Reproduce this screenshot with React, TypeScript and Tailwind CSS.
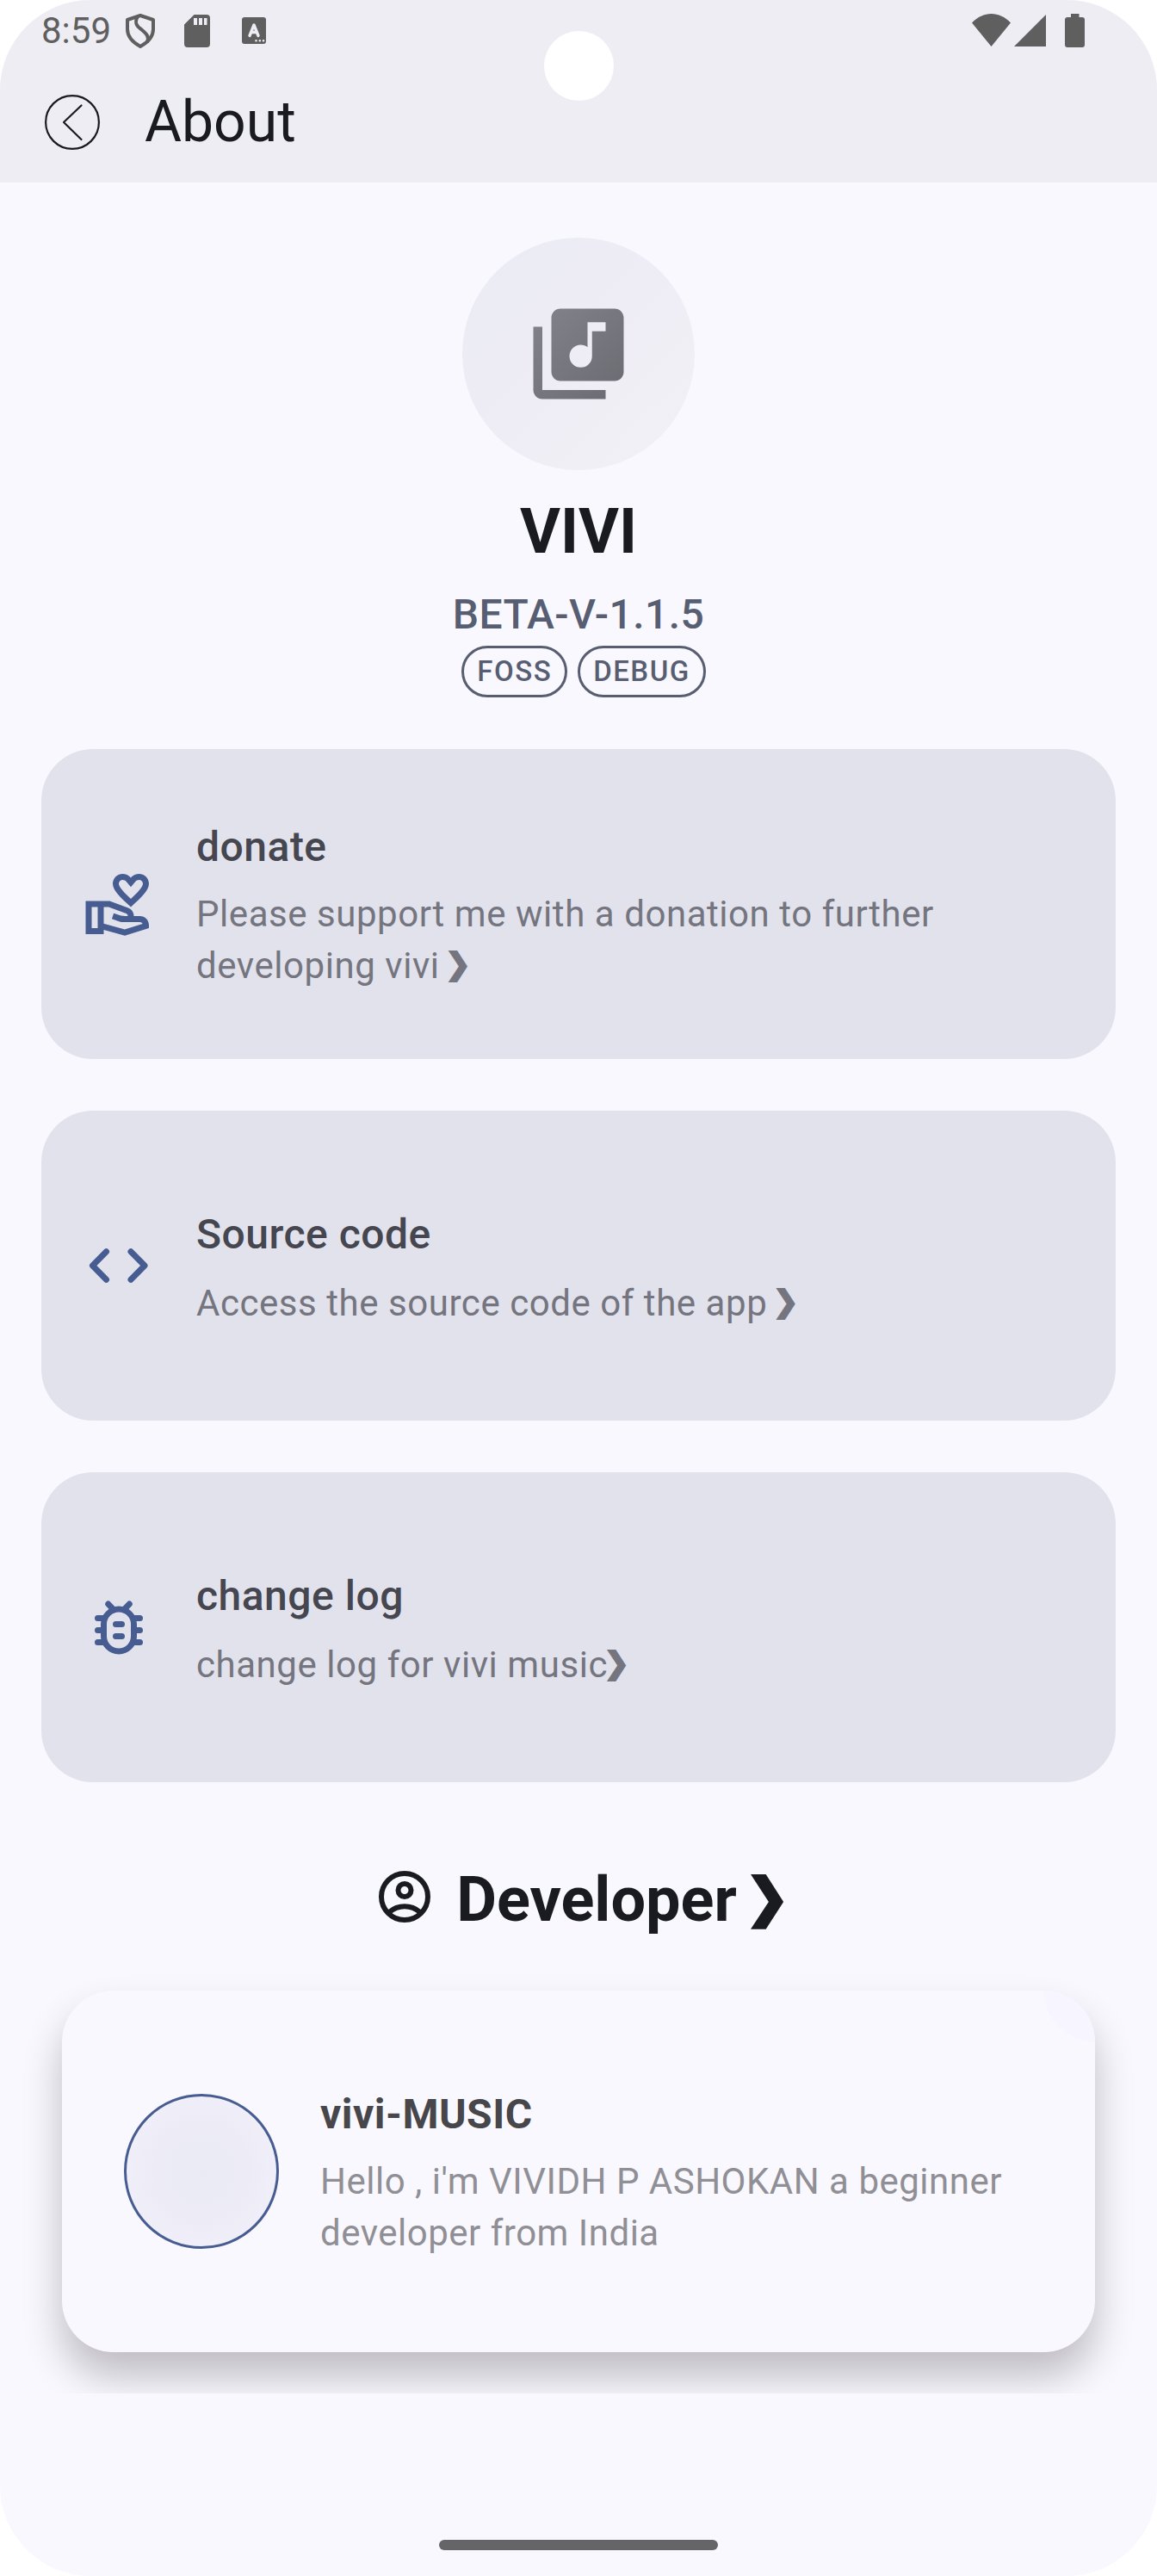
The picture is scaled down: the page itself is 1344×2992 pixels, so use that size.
import React from "react";
import { MdOutlineVolunteerActivism } from "react-icons/md";

function Chevron() {
  return (
    <span className="relative top-[0.01em] inline-flex w-[0.44em] justify-center font-['DejaVu_Sans_Mono',monospace] text-[1.14em] font-normal leading-none tracking-normal [-webkit-text-stroke:0.045em_currentColor]">
      ❯
    </span>
  );
}

function StatusBar() {
  return (
    <div className="flex h-[68px] items-start justify-between pl-12 pr-[84px] text-[#5f5f60]">
      <div className="flex items-start">
        <span className="mt-[11px] w-[96px] text-[42px] leading-[50px]">8:59</span>
        <svg className="mt-[15px] h-[42px] w-[38px]" viewBox="0 0 38 42" fill="none" stroke="currentColor" strokeWidth="4">
          <path d="M19 3 34 8v11c0 8-6 15-15 20C10 34 4 27 4 19V8Z" strokeLinejoin="round" />
          <path d="M16 4c-4 7-2 11 4 15 6 5 10 9 7 15" />
        </svg>
        <svg className="ml-[32px] mt-[17px] h-[38px] w-[30px]" viewBox="0 0 30 38" fill="currentColor">
          <path
            fillRule="evenodd"
            d="M11.500 0H26a4 4 0 0 1 4 4v30a4 4 0 0 1-4 4H4a4 4 0 0 1-4-4V11.500ZM11 4v8h4V4Zm6 0v8h4V4Zm6 0v8h3.500V4Z"
          />
        </svg>
        <span className="ml-[37px] mt-5 flex h-[31px] w-[28px] rounded-[3px] bg-[#5f5f60]">
          <svg className="h-[31px] w-[28px]" viewBox="0 0 28 31" fill="none" stroke="#eeedf4" strokeWidth="3.400" strokeLinecap="round" strokeLinejoin="round">
            <path d="m9 21.500 5-12.500 5 12.500M11 17.500h6" />
            <path d="M16.500 27.300h.01M20.800 27.300h.01M25 27.300h.01" strokeWidth="2.600" />
          </svg>
        </span>
      </div>
      <div className="flex">
        <svg className="mt-4 h-[38px] w-[45px]" viewBox="0 0 45 38" fill="currentColor">
          <path d="M0 10.500C13-3.500 32-3.500 45 10.500L22.500 38Z" />
        </svg>
        <svg className="ml-1 mt-[17px] h-[37px] w-[37px]" viewBox="0 0 37 37" fill="currentColor">
          <path d="M37 0v37H0Z" />
        </svg>
        <svg className="ml-[22px] mt-4 h-[39px] w-[23px]" viewBox="0 0 23 39" fill="currentColor">
          <path d="M7 0h9.500v4H20a3 3 0 0 1 3 3v29a3 3 0 0 1-3 3H3a3 3 0 0 1-3-3V7a3 3 0 0 1 3-3h4Z" />
        </svg>
      </div>
    </div>
  );
}

function LibraryIcon() {
  return (
    <svg className="size-[126px]" viewBox="0 0 24 24">
      <linearGradient id="note" x1="0" y1="0" x2="1" y2="1">
        <stop offset="0" stopColor="#83838c" />
        <stop offset="1" stopColor="#6a6a71" />
      </linearGradient>
      <path
        fill="url(#note)"
        d="M20 2H8c-1.100 0-2 .9-2 2v12c0 1.100.9 2 2 2h12c1.100 0 2-.9 2-2V4c0-1.100-.9-2-2-2zm-2 5h-3v5.500a2.500 2.500 0 0 1-5 0 2.500 2.500 0 0 1 2.500-2.500c.57 0 1.080.19 1.500.51V5h4v2zM4 6H2v14c0 1.100.9 2 2 2h14v-2H4V6z"
      />
    </svg>
  );
}

function CodeIcon() {
  return (
    <svg className="size-[84px]" viewBox="0 0 84 84" fill="none" stroke="currentColor" strokeWidth="7" strokeLinecap="round" strokeLinejoin="round">
      <path d="M27.500 25.700 11.500 42l16 16.300M56 25.700 72 42 56 58.300" />
    </svg>
  );
}

function BugIcon() {
  return (
    <svg className="size-[84px]" viewBox="0 0 24 24" fill="none" stroke="currentColor" strokeWidth="2" strokeLinecap="round">
      <rect x="7" y="6" width="10" height="14" rx="5" />
      <path d="M11 11h2M11 15h2M5 9h2M5 13h2M5 17h2M17 9h2M17 13h2M17 17h2M8.500 4.300l1.800 1.900M15.500 4.300l-1.800 1.900" />
    </svg>
  );
}

function AccountIcon() {
  return (
    <svg className="size-[72px]" viewBox="0 0 24 24" fill="none" stroke="currentColor" strokeWidth="2">
      <circle cx="12" cy="12" r="9" />
      <circle cx="12" cy="9.500" r="2.500" />
      <path d="M6 18c3.500-3 8.500-3 12 0" />
    </svg>
  );
}

function InfoCard({
  icon,
  title,
  textClass = "mt-[14px] -mb-0.5",
  children,
}: {
  icon: React.ReactNode;
  title: string;
  textClass?: string;
  children: React.ReactNode;
}) {
  return (
    <section className="flex h-[360px] items-center gap-12 rounded-[60px] bg-[#e1e2ec] px-12">
      <div className="shrink-0 text-[#475d92]">{icon}</div>
      <div>
        <h2 className="text-[48px] font-medium leading-[72px] tracking-[0.5px] text-[#45464f]">{title}</h2>
        <p className={`text-[42px] leading-[60px] tracking-[0.55px] text-[#75757f] ${textClass}`}>{children}</p>
      </div>
    </section>
  );
}

export default function App() {
  return (
    <div className="h-[2992px] w-[1344px] bg-white">
      <div className="relative flex h-full flex-col overflow-hidden rounded-[105px] bg-[#faf8ff] font-[Roboto,sans-serif] text-[#1a1b20]">
        <div className="absolute left-[631.5px] top-[35.5px] size-[81px] rounded-full bg-white" />
        <header className="h-[212px] shrink-0 bg-[#eeedf4]">
          <StatusBar />
          <div className="flex h-[144px] items-center pl-[52px] pt-1">
            <svg className="size-16" viewBox="0 0 64 64" fill="none" stroke="currentColor" strokeWidth="2.200" strokeLinecap="round" strokeLinejoin="round">
              <circle cx="32" cy="32" r="30.900" />
              <path d="M42.500 12.500 22 32l20.500 20" />
            </svg>
            <h1 className="ml-[52px] text-[66px] leading-[84px]">About</h1>
          </div>
        </header>

        <main className="flex flex-col px-12 pt-16">
          <div className="flex flex-col items-center">
            <div className="flex size-[270px] items-center justify-center rounded-full bg-linear-135 from-[#ebebf3] via-[#eeedf6] to-[#f2f1f5]">
              <LibraryIcon />
            </div>
            <h2 className="mt-6 text-[72px] font-bold leading-[96px]">VIVI</h2>
            <p className="mt-3 text-[48px] font-medium leading-[72px] tracking-[0.45px] text-[#585e71]">BETA-V-1.1.5</p>
            <div className="flex text-[33px] font-medium leading-[54px] tracking-[1.5px] text-[#585e71]">
              <span className="ml-3 rounded-full border-[3px] border-[#585e71] px-[15px]">FOSS</span>
              <span className="ml-3 rounded-full border-[3px] border-[#585e71] px-[15px]">DEBUG</span>
            </div>
          </div>

          <div className="mt-[60px] flex flex-col gap-[60px]">
            <InfoCard icon={<MdOutlineVolunteerActivism className="size-[84px]" />} title="donate" textClass="mt-3">
              Please support me with a donation to further
              <br />
              developing vivi <Chevron />
            </InfoCard>
            <InfoCard icon={<CodeIcon />} title="Source code">
              Access the source code of the app <Chevron />
            </InfoCard>
            <InfoCard icon={<BugIcon />} title="change log">
              change log for vivi music
              <Chevron />
            </InfoCard>
          </div>

          <div className="mt-[88px] flex h-24 items-start justify-center gap-6">
            <div className="mt-[9px]">
              <AccountIcon />
            </div>
            <h2 className="pt-px text-[72px] font-bold leading-[96px]">
              Developer <Chevron />
            </h2>
          </div>
        </main>

        <div className="-mt-2 h-[534px] shrink-0 overflow-hidden px-[72px] pt-[66px]">
          <section className="relative flex h-[420px] items-center gap-12 rounded-[60px] bg-[#faf8ff] px-[72px] shadow-[0_28px_46px_rgba(0,0,0,0.24)]">
            <div className="absolute inset-0 overflow-hidden rounded-[60px]">
              <div className="absolute -right-[60px] -top-[60px] size-[120px] rounded-full bg-[#f7f5ff]" />
            </div>
            <div className="size-[180px] shrink-0 rounded-full border-[3px] border-[#475d92] bg-[radial-gradient(circle_closest-side,#e9eaf4_0%,#edecf6_60%,#f0eef8_100%)]" />
            <div>
              <h3 className="text-[48px] font-bold leading-[72px] tracking-[0.5px] text-[#47474b]">vivi-MUSIC</h3>
              <p className="mt-3 text-[42px] leading-[60px] tracking-[0.5px] text-[#8f8f95]">
                Hello , i'm VIVIDH P ASHOKAN a beginner
                <br />
                developer from India
              </p>
            </div>
          </section>
        </div>

        <div className="mt-auto mb-[30px] h-3 w-[324px] self-center rounded-full bg-[#656567]" />
      </div>
    </div>
  );
}
